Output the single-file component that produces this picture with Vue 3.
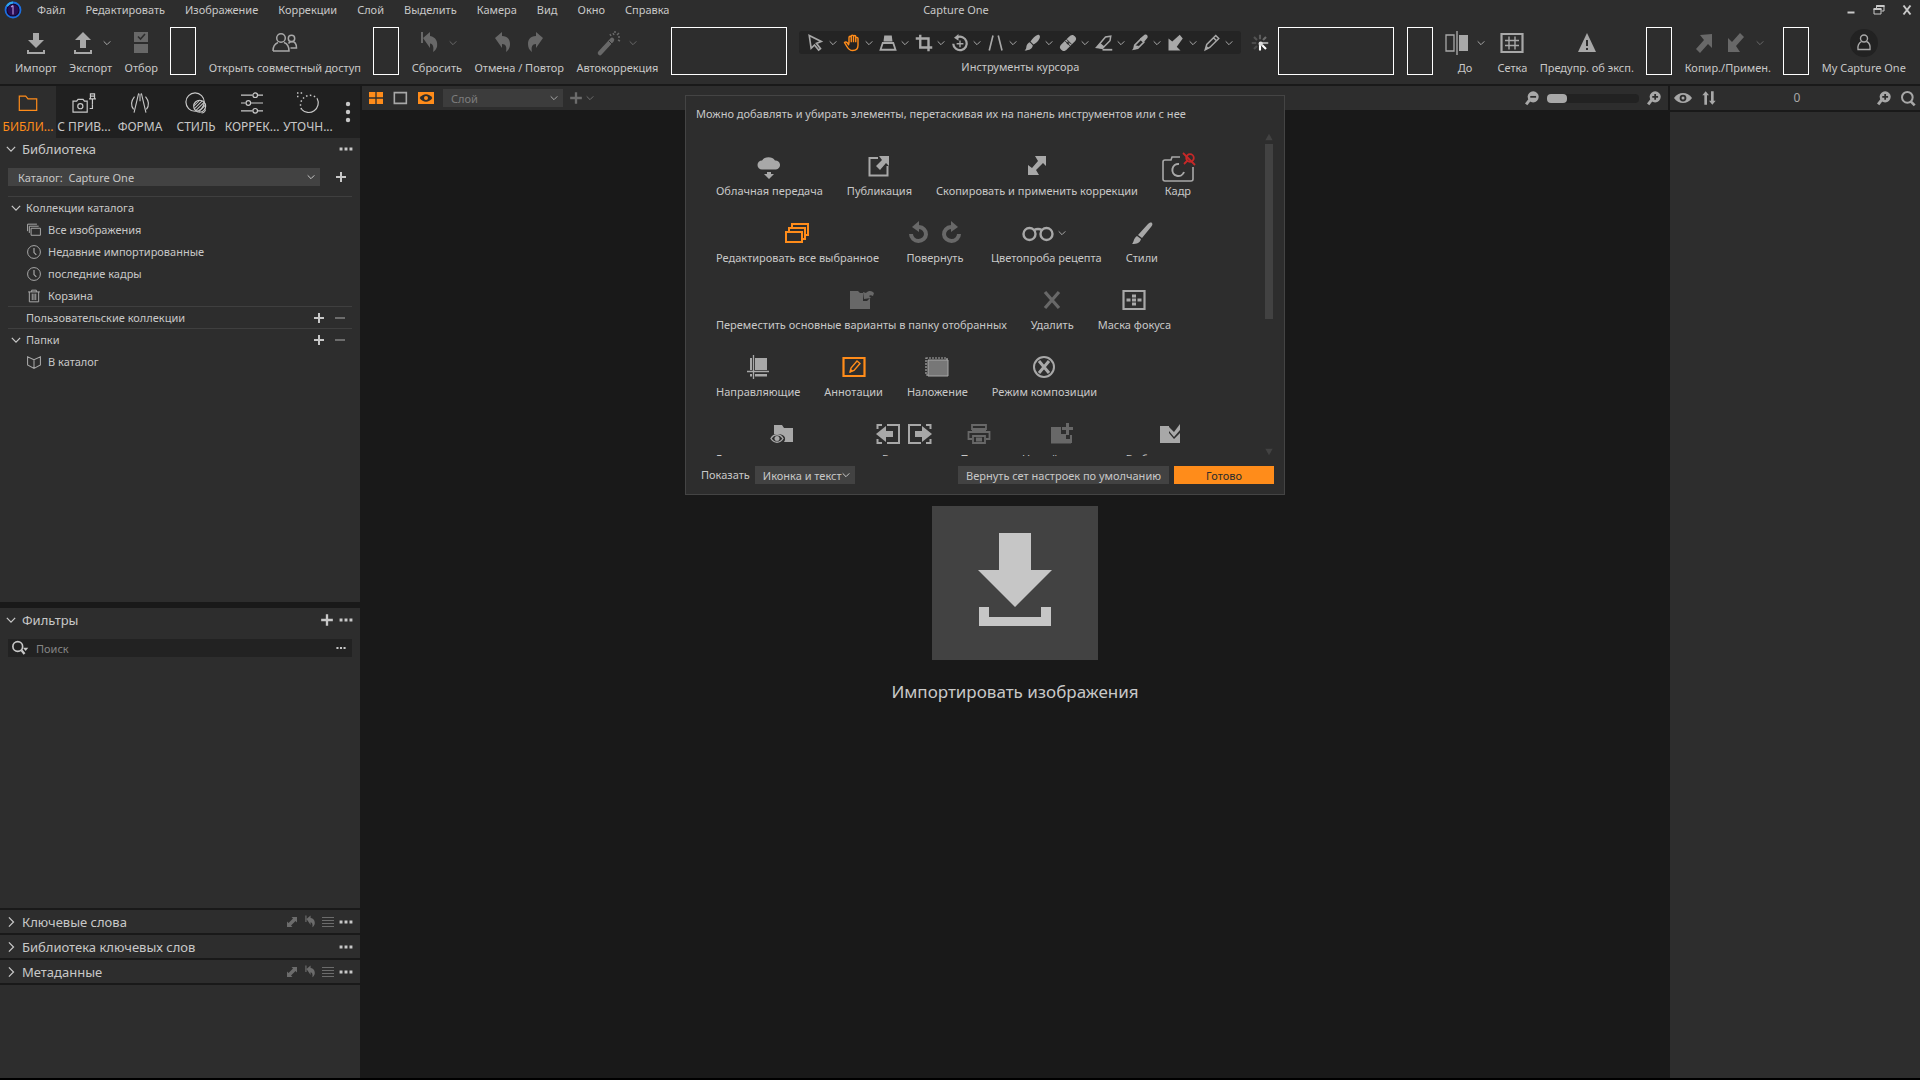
<template>
  <div class="app">
    <header class="menubar">
      <Icon name="logo" :size="18" class="logo" />
      <nav class="menu">
        <button v-for="item in menu" :key="item" class="menu-item">{{ item }}</button>
      </nav>
      <span class="title">Capture One</span>
      <div class="window-buttons">
        <button aria-label="Свернуть"><Icon name="minimize" :size="12" /></button>
        <button aria-label="Восстановить"><Icon name="restore" :size="12" /></button>
        <button aria-label="Закрыть"><Icon name="close" :size="12" /></button>
      </div>
    </header>

    <div class="toolbar">
      <template v-for="(tool, i) in toolbar" :key="i">
        <div v-if="tool.space" :class="['space', tool.space]"></div>
        <div v-else-if="tool.spinner" class="spinner"><Icon name="spinner" :size="18" /></div>
        <div v-else-if="tool.cursors" class="tool">
          <div class="cursor-tools">
            <button v-for="c in cursors" :key="c" :class="['cursor-tool', { active: c === 'hand' }]" :aria-label="c">
              <Icon :name="c" :size="18" />
              <Icon name="chevron" :size="8" class="drop" />
            </button>
          </div>
          <span class="label">{{ tool.label }}</span>
        </div>
        <button v-else :class="['tool', { disabled: tool.disabled, account: tool.account }]">
          <span class="tool-icons">
            <Icon v-for="n in tool.icons" :key="n" :name="n" :size="24" />
            <Icon v-if="tool.drop" name="chevron" :size="8" />
          </span>
          <span class="label">{{ tool.label }}</span>
        </button>
      </template>
    </div>

    <div class="main">
      <aside class="sidebar">
        <div class="tabs">
          <button v-for="tab in tabs" :key="tab.label" :class="['tab', { active: tab.active }]">
            <Icon :name="tab.icon" :size="22" />
            <span>{{ tab.label }}</span>
          </button>
          <button class="tabs-more" aria-label="Ещё"><Icon name="dotsV" :size="24" /></button>
        </div>

        <section class="panel library">
          <div class="panel-head">
            <Icon name="chevron" :size="10" />
            <h2>Библиотека</h2>
            <button class="push" aria-label="Меню"><Icon name="dots" :size="14" /></button>
          </div>
          <div class="catalog">
            <div class="select-wrap">
              <select aria-label="Каталог">
                <option>Каталог:&nbsp; Capture One</option>
              </select>
              <Icon name="chevron" :size="8" class="select-arrow" />
            </div>
            <button aria-label="Добавить каталог"><Icon name="plus" :size="12" /></button>
          </div>
          <ul class="tree">
            <li v-for="row in tree" :key="row.label" :class="['row', { group: row.group }]">
              <Icon v-if="row.group" :name="row.open ? 'chevron' : 'none'" :size="10" />
              <Icon v-else :name="row.icon" :size="14" class="row-icon" />
              <span>{{ row.label }}</span>
              <span v-if="row.edit" class="row-edit">
                <button aria-label="Добавить"><Icon name="plus" :size="12" /></button>
                <button aria-label="Удалить" class="dim"><Icon name="minus" :size="12" /></button>
              </span>
            </li>
          </ul>
        </section>

        <section class="panel filters">
          <div class="panel-head">
            <Icon name="chevron" :size="10" />
            <h2>Фильтры</h2>
            <button class="push" aria-label="Добавить фильтр"><Icon name="plus" :size="14" /></button>
            <button aria-label="Меню"><Icon name="dots" :size="14" /></button>
          </div>
          <div class="search">
            <Icon name="searchDrop" :size="18" />
            <input v-model="query" type="text" placeholder="Поиск" aria-label="Поиск" />
            <button aria-label="Параметры поиска"><Icon name="dots" :size="10" /></button>
          </div>
        </section>

        <section v-for="p in collapsed" :key="p.label" class="panel">
          <div class="panel-head">
            <Icon name="chevronRight" :size="10" />
            <h2>{{ p.label }}</h2>
            <span class="push panel-actions">
              <template v-if="p.actions">
                <button class="dim" aria-label="Копировать"><Icon name="expand" :size="12" /></button>
                <button class="dim" aria-label="Сбросить"><Icon name="reset" :size="14" /></button>
                <button class="dim" aria-label="Наборы"><Icon name="lines" :size="12" /></button>
              </template>
              <button aria-label="Меню"><Icon name="dots" :size="14" /></button>
            </span>
          </div>
        </section>
        <div class="panel rest"></div>
      </aside>

      <main class="viewer">
        <div class="viewer-bar">
          <button class="active" aria-label="Сетка"><Icon name="grid4" :size="16" /></button>
          <button aria-label="Один кадр"><Icon name="frame" :size="16" /></button>
          <button class="active" aria-label="Просмотр"><Icon name="eyeBox" :size="16" /></button>
          <div class="layers">
            <div class="select-wrap layer">
              <select disabled aria-label="Слой">
                <option>Слой</option>
              </select>
              <Icon name="chevron" :size="8" class="select-arrow" />
            </div>
            <button class="dim add-layer" aria-label="Добавить слой">
              <Icon name="plus" :size="14" /><Icon name="chevron" :size="8" />
            </button>
          </div>
          <div class="zoom">
            <button aria-label="Уменьшить"><Icon name="zoomOut" :size="14" /></button>
            <input v-model="zoom" type="range" min="0" max="100" aria-label="Масштаб" />
            <button aria-label="Увеличить"><Icon name="zoomIn" :size="14" /></button>
          </div>
        </div>
        <div class="empty">
          <button class="import" aria-labelledby="import-label">
            <svg width="74" height="94" viewBox="0 0 74 94" fill="#c6c6c6">
              <path d="M21 0h32v37h21L37 74 0 37h21z" />
              <path d="M1 74h10v10h52V74h10v19H1z" />
            </svg>
          </button>
          <span id="import-label" class="import-label">Импортировать изображения</span>
        </div>
      </main>

      <aside class="browser">
        <div class="browser-bar">
          <button aria-label="Показать"><Icon name="eye" :size="18" /></button>
          <button aria-label="Сортировка"><Icon name="sort" :size="16" /></button>
          <span class="count">0</span>
          <button aria-label="Увеличить"><Icon name="zoomIn" :size="14" /></button>
          <button aria-label="Искать"><Icon name="search" :size="16" /></button>
        </div>
        <div class="browser-body"></div>
      </aside>
    </div>

    <div class="dialog" role="dialog" aria-label="Настройка панели инструментов">
      <p>Можно добавлять и убирать элементы, перетаскивая их на панель инструментов или с нее</p>
      <div class="palette">
        <div class="palette-rows">
          <div v-for="(row, i) in palette" :key="i" class="palette-row">
            <button v-for="t in row" :key="t.label" :class="['tool', { disabled: t.disabled, active: t.active }]">
              <span class="tool-icons">
                <Icon v-for="n in t.icons" :key="n" :name="n" :size="24" />
                <Icon v-if="t.drop" name="chevron" :size="8" />
              </span>
              <span class="label">{{ t.label }}</span>
            </button>
          </div>
        </div>
        <div class="scrollbar">
          <Icon name="triUp" :size="8" />
          <div class="track"><div class="thumb"></div></div>
          <Icon name="triDown" :size="8" />
        </div>
      </div>
      <div class="dialog-foot">
        <label for="show">Показать</label>
        <div class="select-wrap show">
          <select id="show">
            <option>Иконка и текст</option>
          </select>
          <Icon name="chevron" :size="8" class="select-arrow" />
        </div>
        <button class="btn push">Вернуть сет настроек по умолчанию</button>
        <button class="btn primary">Готово</button>
      </div>
    </div>
  </div>
</template>

<script setup>
import { ref, h } from 'vue';

const query = ref('');
const zoom = ref(0);

const S = 'fill="none" stroke="currentColor"';

// every icon is drawn on a 24 x 24 grid
const icons = {
  none: '',
  logo: '<circle cx="12" cy="12" r="10" fill="#14062b" stroke="#1d6fe0" stroke-width="2.4"/><path d="M4 7a10 10 0 0 1 8-5" fill="none" stroke="#31a8f0" stroke-width="2.4"/><circle cx="12" cy="12" r="7.4" fill="#2a0d55"/><path d="M12 6v12M12 6l-2.500 2" fill="none" stroke="#b79be0" stroke-width="1.500"/>',
  minimize: '<path d="M5 15h14v4H5z" fill="currentColor"/>',
  restore: `<path d="M7 8V3h15v11h-5" ${S} stroke-width="2"/><path d="M7 2h16v4H7z" fill="currentColor"/><path d="M2 10h14v10H2z" ${S} stroke-width="2"/><path d="M1 8h16v4H1z" fill="currentColor"/>`,
  close: `<path d="M5 3l14 18M19 3L5 21" ${S} stroke-width="4"/>`,
  chevron: `<path d="M2 7l10 10L22 7" ${S} stroke-width="3"/>`,
  chevronRight: `<path d="M7 1l11 11L7 23" ${S} stroke-width="3"/>`,
  plus: `<path d="M12 2v20M2 12h20" ${S} stroke-width="4"/>`,
  minus: `<path d="M2 12h20" ${S} stroke-width="4"/>`,
  dots: '<path d="M1 9.500h5v5H1zM9.500 9.500h5v5h-5zM18 9.500h5v5h-5z" fill="currentColor"/>',
  dotsV: '<circle cx="12" cy="4" r="2.200" fill="currentColor"/><circle cx="12" cy="12" r="2.200" fill="currentColor"/><circle cx="12" cy="20" r="2.200" fill="currentColor"/>',
  import: `<path d="M9 2h6v7h5l-8 8-8-8h5z" fill="currentColor"/><path d="M4 19v3h16v-3" ${S} stroke-width="2"/>`,
  export: `<path d="M12 1l8 8h-5v8H9V9H4z" fill="currentColor"/><path d="M4 19v3h16v-3" ${S} stroke-width="2"/>`,
  cull: `<path d="M5 1h14v10H5zM5 13h14v9H5z" fill="currentColor"/><path d="M9 5.500l2.500 2.500L16 3" fill="none" stroke="#2d2d2d" stroke-width="1.600"/>`,
  people: `<circle cx="8" cy="7" r="4.300" ${S} stroke-width="1.500"/><path d="M0 20c0-5 2.500-7.500 5-8.500M11 11.500c3 1 5 4 5 8.500H0" ${S} stroke-width="1.500"/><circle cx="18.500" cy="7.500" r="3.200" ${S} stroke-width="1.500"/><path d="M15.500 12.500c1-1.500 2-2 3-2 3 0 5 2 5 6.500h-6" ${S} stroke-width="1.500"/>`,
  reset: '<path d="M4 2h2v11H4zM6 8l7-6v4c6 1 8 6 7 11-1 2-2 4-4 5 1-5 0-8-3-8.500V18z" fill="currentColor" transform="translate(0 -1)"/>',
  undo: '<path d="M4 8l7-6v4c6 0 8 4 8 8 0 3-1 6-4 8 1-5 0-8-4-8v4z" fill="currentColor" transform="translate(0 -1)"/>',
  redo: '<path d="M20 8l-7-6v4c-6 0-8 4-8 8 0 3 1 6 4 8-1-5 0-8 4-8v4z" fill="currentColor" transform="translate(0 -1)"/>',
  wand: `<path d="M3 22L15 9" ${S} stroke-width="4.500" stroke-linecap="round"/><path d="M12 10l3 3" stroke="#2d2d2d" stroke-width="1"/><path d="M16 2l1 2M22 2l-2 2M21 9l2 1M13 3l1 2M23 6h-2M18 0v2" ${S} stroke-width="1.500"/>`,
  pointer: `<path d="M3 2l16 8-6.500 2.500 5.500 7-2.500 2-5.500-7L5.500 19z" ${S} stroke-width="2.200"/>`,
  hand: `<path d="M8 13V4.500a1.400 1.400 0 0 1 3 0V11M11 10V3a1.400 1.400 0 0 1 3 0v8M14 10V3.500a1.400 1.400 0 0 1 3 0V11M17 11V6a1.400 1.400 0 0 1 3 0v9c0 4-2 7-7 7-4 0-6-2-7.500-5L2 11.500c1-1.500 3-1 4 .5l2 3" ${S} stroke-width="1.900"/>`,
  loupe: `<path d="M7 2h10l1 8H6z" fill="currentColor"/><path d="M5 12l-3 9h20l-3-9z" ${S} stroke-width="2.400"/>`,
  crop: `<path d="M7 1v17h16M1 6h17v17" ${S} stroke-width="3.200"/>`,
  rotate: `<path d="M8 4.500a9 9 0 1 1-5 8.500" ${S} stroke-width="3"/><path d="M10 0v9L4 5z" fill="currentColor"/><path d="M12 8.500v9M7.500 13h9" ${S} stroke-width="1.800"/>`,
  keystone: `<path d="M8 2L3 22M15 2l5 20" ${S} stroke-width="2.200"/>`,
  brush: '<path d="M20 1c3 0 3 3 2 5-2 4-4 6-8 8l-4-4c3-4 6-8 10-9zM9 11l4 4c0 4-4 7-11 7 3-2 2-4 3-7 1-2 2-3 4-4z" fill="currentColor"/>',
  heal: '<path d="M3 21c-3-3-2-5 1-8L13 4c3-3 5-4 8-1s2 5-1 8l-9 9c-3 3-5 4-8 1z" fill="currentColor"/><path d="M8 9l7 7M10 7l7 7M12 10v4M10 12h4" stroke="#242424" stroke-width="1.300"/>',
  eraser: `<path d="M2 18L14 4l7-1-1 6L10 19z" ${S} stroke-width="2"/><path d="M10 21h13" ${S} stroke-width="2.400"/><path d="M2 18l5-6 6 5-3 3z" fill="currentColor"/>`,
  dropper: `<path d="M4 20l1-5 8-8 4 4-8 8z" ${S} stroke-width="2.200"/><path d="M12 6l6-5c3-1 5 1 4 4l-5 6zM1 22l4-2-1-2zM5 15l6 1-4 4-4 1z" fill="currentColor"/>`,
  applyArrow: '<path d="M23 6l-4-5-10 9-5-4v16h16l-5-5z" fill="currentColor" transform="translate(-2 0)"/>',
  pen: `<path d="M3 21l2-7L17 2l4 4L9 18zM14 5l4 4" ${S} stroke-width="2"/><path d="M3 21l2-5 3 3z" fill="currentColor"/>`,
  spinner: `<g ${S} stroke-width="2.800"><path d="M12 1v6" opacity=".3"/><path d="M20 4l-4 4" opacity=".4"/><path d="M15 12h8" opacity=".75"/><path d="M15 15l5 5" stroke="#fff"/><path d="M12 14v8" stroke="#fff"/><path d="M8 16l-4 4" opacity=".2"/><path d="M1 12h6" opacity=".2"/><path d="M4 4l4 4" opacity=".25"/></g><circle cx="13" cy="13" r="3" fill="#ddd"/>`,
  before: `<path d="M1 4h8v16H1z" ${S} stroke-width="1.300"/><path d="M14 4h9v16h-9z" fill="currentColor"/><path d="M12 0v24" ${S} stroke-width="1.400"/>`,
  gridBox: `<path d="M1.500 3h21v18h-21z" ${S} stroke-width="2.200"/><path d="M9 5.500v13M15 5.500v13M5 9.500h14M5 14.500h14" ${S} stroke-width="1.400"/>`,
  warning: '<path d="M12 2l9 19H3z" fill="currentColor"/><path d="M12 9v6M12 17v2" stroke="#2d2d2d" stroke-width="2"/>',
  arrowUp: '<path d="M20 3v14l-4-4-8 9-4-4 8-9-4-5z" fill="currentColor"/>',
  arrowDown: '<path d="M4 21V7l4 4 8-9 4 4-8 9 4 6z" fill="currentColor"/>',
  user: `<circle cx="12" cy="12" r="14" fill="#222"/><circle cx="12" cy="7.500" r="3.500" ${S} stroke-width="1.400"/><path d="M9.500 10.500C7 12 5.500 15 6 18.500h12c.5-4-1-7-3.500-8" ${S} stroke-width="1.400"/>`,
  folder: `<path d="M2.500 4.500h7l2.500 3h9.500v12.500h-19z" ${S} stroke-width="1.300"/>`,
  tether: `<path d="M0 10h4l1.500-2h5.500l1.500 2h3v12H0z" ${S} stroke-width="1.300"/><circle cx="8" cy="15.500" r="2.800" ${S} stroke-width="1.300"/><path d="M19 2v5.500h4.500V2zM17.500 7.500h7.500M19 4.500h4.500M21.200 8v6" ${S} stroke-width="1.300"/><path d="M21.200 14v4h-3" ${S} stroke-width="1.300"/>`,
  shape: `<path d="M10.500 1.500l-5 21M13.500 1.500l5 21M12 2v8M6 5c-4 5-4 10-1 14M18 5c4 5 4 10 1 14" ${S} stroke-width="1.200"/>`,
  style: `<circle cx="11" cy="11" r="10" ${S} stroke-width="1.300"/><circle cx="16" cy="15.500" r="6.500" ${S} stroke-width="1.300"/><path d="M10 15l6-6M10.500 18l8-8M12 20l8.500-8.500M15 21.500l7-7M22 19c1 2-2 4-4 4" ${S} stroke-width="1.100"/>`,
  adjust: `<path d="M0 3.500h12.500M18 3.500h6M0 12h5M11 12h13M0 20.500h12.500M18 20.500h6" ${S} stroke-width="1.300"/><circle cx="15.500" cy="3.500" r="2.500" ${S} stroke-width="1.300"/><circle cx="8" cy="12" r="2.500" ${S} stroke-width="1.300"/><circle cx="15.500" cy="20.500" r="2.500" ${S} stroke-width="1.300"/>`,
  refine: `<path d="M22 7a10.500 10.500 0 0 1-17 12" ${S} stroke-width="1.300"/><path d="M5 19A10.500 10.500 0 0 1 22 7" ${S} stroke-width="1.600" stroke-dasharray="1.600 2.600"/><path d="M0 1h1.600M4 1h1.600M0 5h1.600" ${S} stroke-width="1.600"/>`,
  stack: `<path d="M7 9h16v12H7zM4 17V5.500h16M1 14V2h16" ${S} stroke-width="1.700"/>`,
  clock: `<circle cx="12" cy="12" r="11" ${S} stroke-width="1.700"/><path d="M12 5v8l4 4" ${S} stroke-width="2"/>`,
  trash: `<path d="M2 5h20M4 5v17h16V5M8 5V2h8v3M9 8v11M12 8v11M15 8v11" ${S} stroke-width="1.700"/>`,
  book: `<path d="M12 8L1 3v14l11 6 11-6V3zM12 8v15" ${S} stroke-width="1.800"/>`,
  searchDrop: `<circle cx="9" cy="10" r="6.500" ${S} stroke-width="2.200"/><path d="M14 15l4 5" ${S} stroke-width="3"/><path d="M16 11.500h7L19.500 16z" fill="currentColor"/>`,
  search: `<circle cx="11" cy="11" r="8" ${S} stroke-width="3"/><path d="M16 17l6 6" ${S} stroke-width="4"/>`,
  expand: '<path d="M22 2v11l-3-3-9 9 3 3H2V11l3 3 9-9-3-3z" fill="currentColor"/>',
  lines: `<path d="M0 3h24M0 9h24M0 15h24M0 21h24" ${S} stroke-width="2"/>`,
  grid4: '<path d="M1.500 3h9.500v8H1.500zM13 3h9.500v8H13zM1.500 13h9.500v8H1.500zM13 13h9.500v8H13z" fill="currentColor"/>',
  frame: `<path d="M2 4h18v16H2z" ${S} stroke-width="2.400"/>`,
  eyeBox: '<path d="M0 3h24v18H0z" fill="currentColor"/><path d="M2.500 12c5-7.500 14-7.500 19 0-5 7.500-14 7.500-19 0z" fill="#2d2d2d"/><circle cx="12" cy="12" r="3" fill="currentColor"/>',
  eye: '<path d="M0 12C6 3 18 3 24 12c-6 9-18 9-24 0z" fill="currentColor"/><circle cx="12" cy="12" r="4.500" fill="#2d2d2d"/><circle cx="12" cy="12" r="2" fill="currentColor"/>',
  sort: '<path d="M7 2l5 6H9v14H5V8H2zM17 22l-5-6h3V2h4v14h3z" fill="currentColor"/>',
  zoomOut: `<circle cx="14" cy="10" r="9.500" fill="currentColor"/><path d="M8 15l-6 8" ${S} stroke-width="5"/><path d="M9 10h10" stroke="#2d2d2d" stroke-width="3"/>`,
  zoomIn: `<circle cx="14" cy="10" r="9.500" fill="currentColor"/><path d="M8 15l-6 8" ${S} stroke-width="5"/><path d="M9 10h10M14 5v10" stroke="#2d2d2d" stroke-width="3"/>`,
  cloud: '<path d="M5 14.500a4.500 4.500 0 0 1 0-9 7.500 6.500 0 0 1 13 0 4.500 4.500 0 0 1 1 9z" fill="currentColor" transform="translate(0 1)"/><path d="M10 18h4v2h3l-5 5-5-5h3z" fill="currentColor"/>',
  publish: `<path d="M11 4H2.500v17.500h18V12" ${S} stroke-width="2"/><path d="M22 2v10l-3-3-6 7-4-4 6-6-3-4z" fill="currentColor"/>`,
  copyApply: '<path d="M21 2v10l-3-3-7 7 3 5H3V11l4 3 6-7-3-5z" fill="currentColor"/>',
  camera: `<path d="M14 3H6L5 6H-1c-1 0-2 1-2 2v17c0 1 1 2 2 2h26c1 0 2-1 2-2V13" ${S} stroke-width="1.600"/><path d="M13 10a6 6 0 1 0 5 8" ${S} stroke-width="2"/><circle cx="24" cy="4" r="3.800" fill="none" stroke="#c62828" stroke-width="1.800"/><path d="M17 -1l12 12M18 10l4-4" stroke="#c62828" stroke-width="1.800"/>`,
  editAll: `<path d="M1 11h16v10H1zM4 10V7h16v11h-2M7 6V3h16v11h-2" ${S} stroke-width="2"/>`,
  rotL: `<path d="M4 13a7.500 7 0 1 0 8-7" ${S} stroke-width="4"/><path d="M12 0v11L5 6z" fill="currentColor"/>`,
  rotR: `<path d="M20 13a7.500 7 0 1 1-8-7" ${S} stroke-width="4"/><path d="M12 0v11l7-5z" fill="currentColor"/>`,
  glasses: `<circle cx="3.500" cy="13" r="6" ${S} stroke-width="2.400"/><circle cx="20.500" cy="13" r="6" ${S} stroke-width="2.400"/><path d="M8 9q4-2 8 0" ${S} stroke-width="2.400"/>`,
  styleBrush: '<path d="M22 2c1 1 0 3-1 4l-9 11-4-3L18 3c1-1 3-2 4-1zM7 15l4 3c-1 4-4 5-9 5 2-2 1-5 5-8z" fill="currentColor"/>',
  moveFolder: '<path d="M1 3h8l2 2h3v8l4 0 3-3v11H1z" fill="currentColor"/><path d="M15 11l-1-7 3 1c3-3 6-2 8 0l-1 3c-2-1-3-1-4 0l2 2z" fill="currentColor"/>',
  del: `<path d="M5 4l14 16M19 4L5 20" ${S} stroke-width="3.200"/>`,
  focusMask: `<path d="M1.500 3h21v18h-21z" ${S} stroke-width="2.200"/><path d="M10 6.500h4v3h-4zM10 14.500h4v3h-4zM4.500 10.500h4v3h-4zM15.500 10.500h4v3h-4zM10 10.500h4v3h-4z" fill="currentColor"/>`,
  guides: `<path d="M9 3h12v12H9zM4 3h2v12H4zM9 19h12v2.500H9zM4 19h2v2.500H4z" fill="currentColor"/><path d="M7.500 0v24M1 16.500h22" ${S} stroke-width="1.300"/>`,
  annotate: `<path d="M1.500 3h21v18h-21z" ${S} stroke-width="2.200"/><path d="M8 17l1-4 6-7 3 2.500-6 7z" ${S} stroke-width="1.400"/><path d="M8 18l1-4 2 2z" fill="currentColor"/>`,
  overlay: `<path d="M1 3h21v17H1z" ${S} stroke-width="1.200" stroke-dasharray="2 1"/><path d="M3 5h20v16H3z" fill="#777" stroke="currentColor"/>`,
  compose: `<circle cx="12" cy="12" r="10" ${S} stroke-width="2"/><path d="M7 6l10 12M17 6L7 18" ${S} stroke-width="3"/>`,
  peekFolder: '<path d="M4 3h8l2 3h9v14H14c3-4 0-8-6-8H4z" fill="currentColor"/><path d="M1 16.500c3-5 9-5 12 0-3 5-9 5-12 0z" fill="none" stroke="currentColor" stroke-width="1.400"/><circle cx="7" cy="16.500" r="2.500" fill="currentColor"/>',
  toLeft: `<path d="M11 3h12v18H11M6 3H1.500v4M1.500 17v4H6" ${S} stroke-width="2"/><path d="M0 12l10-8v5h7v6h-7v5z" fill="currentColor"/>`,
  toRight: `<path d="M13 3H1v18h12M18 3h4.500v4M22.500 17v4H18" ${S} stroke-width="2"/><path d="M24 12L14 4v5H7v6h7v5z" fill="currentColor"/>`,
  print: `<path d="M5 8V3h14v5M5 17H1.500V10h21v7H19M6 14h12v7H6zM9 16.500h6M9 18.500h6" ${S} stroke-width="1.800"/><path d="M5 6h14v5H5z" fill="currentColor"/>`,
  newFolder: '<path d="M1 5h10v7h5v5h5v4.500H1z" fill="currentColor"/><path d="M16 1h3v4h4v3h-4v5h-3V8h-4V5h4zM20 13h2v8h-2z" fill="currentColor"/>',
  checkFolder: '<path d="M2 4h9v17H2zM11 11l5 6 6-6v10H11z" fill="currentColor"/><path d="M11 5l5 5 6-8v6l-6 7-5-6z" fill="currentColor"/>',
  triUp: '<path d="M12 2l11 20H1z" fill="currentColor"/>',
  triDown: '<path d="M12 22L1 2h22z" fill="currentColor"/>',
};

const Icon = (props) =>
  h('svg', {
    width: props.size,
    height: props.size,
    viewBox: '0 0 24 24',
    overflow: 'visible',
    'aria-hidden': 'true',
    innerHTML: icons[props.name],
  });
Icon.props = ['name', 'size'];

const menu = ['Файл', 'Редактировать', 'Изображение', 'Коррекции', 'Слой', 'Выделить', 'Камера', 'Вид', 'Окно', 'Справка'];

const cursors = ['pointer', 'hand', 'loupe', 'crop', 'rotate', 'keystone', 'brush', 'heal', 'eraser', 'dropper', 'applyArrow', 'pen'];

const toolbar = [
  { label: 'Импорт', icons: ['import'] },
  { label: 'Экспорт', icons: ['export'], drop: true },
  { label: 'Отбор', icons: ['cull'], disabled: true },
  { space: 'narrow' },
  { label: 'Открыть совместный доступ', icons: ['people'] },
  { space: 'narrow' },
  { label: 'Сбросить', icons: ['reset'], drop: true, disabled: true },
  { label: 'Отмена / Повтор', icons: ['undo', 'redo'], disabled: true },
  { label: 'Автокоррекция', icons: ['wand'], drop: true, disabled: true },
  { space: 'wide' },
  { label: 'Инструменты курсора', cursors: true },
  { spinner: true },
  { space: 'wide' },
  { space: 'narrow' },
  { label: 'До', icons: ['before'], drop: true },
  { label: 'Сетка', icons: ['gridBox'] },
  { label: 'Предупр. об эксп.', icons: ['warning'] },
  { space: 'narrow' },
  { label: 'Копир./Примен.', icons: ['arrowUp', 'arrowDown'], drop: true, disabled: true },
  { space: 'narrow' },
  { label: 'My Capture One', icons: ['user'], account: true },
];

const tabs = [
  { label: 'БИБЛИ...', icon: 'folder', active: true },
  { label: 'С ПРИВ...', icon: 'tether' },
  { label: 'ФОРМА', icon: 'shape' },
  { label: 'СТИЛЬ', icon: 'style' },
  { label: 'КОРРЕК...', icon: 'adjust' },
  { label: 'УТОЧН...', icon: 'refine' },
];

const tree = [
  { label: 'Коллекции каталога', group: true, open: true },
  { label: 'Все изображения', icon: 'stack' },
  { label: 'Недавние импортированные', icon: 'clock' },
  { label: 'последние кадры', icon: 'clock' },
  { label: 'Корзина', icon: 'trash' },
  { label: 'Пользовательские коллекции', group: true, edit: true },
  { label: 'Папки', group: true, open: true, edit: true },
  { label: 'В каталог', icon: 'book' },
];

const collapsed = [
  { label: 'Ключевые слова', actions: true },
  { label: 'Библиотека ключевых слов' },
  { label: 'Метаданные', actions: true },
];

const palette = [
  [
    { label: 'Облачная передача', icons: ['cloud'] },
    { label: 'Публикация', icons: ['publish'] },
    { label: 'Скопировать и применить коррекции', icons: ['copyApply'] },
    { label: 'Кадр', icons: ['camera'] },
  ],
  [
    { label: 'Редактировать все выбранное', icons: ['editAll'], active: true },
    { label: 'Повернуть', icons: ['rotL', 'rotR'], disabled: true },
    { label: 'Цветопроба рецепта', icons: ['glasses'], drop: true },
    { label: 'Стили', icons: ['styleBrush'] },
  ],
  [
    { label: 'Переместить основные варианты в папку отобранных', icons: ['moveFolder'], disabled: true },
    { label: 'Удалить', icons: ['del'], disabled: true },
    { label: 'Маска фокуса', icons: ['focusMask'] },
  ],
  [
    { label: 'Направляющие', icons: ['guides'] },
    { label: 'Аннотации', icons: ['annotate'], active: true },
    { label: 'Наложение', icons: ['overlay'] },
    { label: 'Режим композиции', icons: ['compose'] },
  ],
  [
    { label: 'Группировать по папкам', icons: ['peekFolder'] },
    { label: 'Вариант', icons: ['toLeft', 'toRight'] },
    { label: 'Печать', icons: ['print'], disabled: true },
    { label: 'Новый каталог', icons: ['newFolder'], disabled: true },
    { label: 'Выбрать каталог', icons: ['checkFolder'] },
  ],
];
</script>

<style>
body {
  background: #000;
}
</style>

<style scoped>
.app {
  position: relative;
  display: flex;
  flex-direction: column;
  height: 100vh;
  box-sizing: border-box;
  border-bottom: 2px solid #000;
  background: #191919;
  color: #c8c8c8;
  font-family: "Noto Sans", "Open Sans", sans-serif;
  font-size: 11px;
  line-height: 16px;
  overflow: hidden;
}

button,
input,
select {
  margin: 0;
  padding: 0;
  border: none;
  background: none;
  color: inherit;
  font: inherit;
  line-height: inherit;
}
button {
  display: flex;
  align-items: center;
  white-space: nowrap;
}
svg {
  display: block;
  flex-shrink: 0;
}
.push {
  margin-left: auto;
}
button.dim {
  color: #6c6c6c;
}

/* menu bar */
.menubar {
  display: flex;
  align-items: center;
  height: 20px;
  padding: 0 7px 0 4px;
  background: #2d2d2d;
}
.menu {
  display: flex;
  gap: 20px;
  margin-left: 15px;
}
.title {
  position: absolute;
  left: 0;
  right: 8px;
  text-align: center;
  pointer-events: none;
}
.window-buttons {
  display: flex;
  gap: 16px;
  margin-left: auto;
}

/* top toolbar */
.toolbar {
  display: flex;
  justify-content: space-between;
  height: 64px;
  flex-shrink: 0;
  box-sizing: border-box;
  padding: 7px 14px 0 15px;
  margin-bottom: 2px;
  background: #2d2d2d;
}
.space {
  height: 48px;
  box-sizing: border-box;
  border: 1px solid #fff;
}
.space.narrow {
  width: 26px;
}
.space.wide {
  width: 116px;
}
.spinner {
  display: flex;
  justify-content: center;
  width: 12px;
  padding-top: 7px;
}
.tool {
  display: flex;
  flex-direction: column;
  align-items: center;
  gap: 5px;
  white-space: nowrap;
}
.toolbar .tool {
  padding-top: 4px;
  height: 48px;
  box-sizing: border-box;
}
.tool-icons {
  display: flex;
  align-items: center;
  gap: 8px;
  height: 24px;
  color: #a8a8a8;
}
.disabled .tool-icons {
  color: #686868;
}
.active .tool-icons {
  color: #ff8c1a;
}
.cursor-tools {
  display: flex;
  height: 24px;
  padding: 0 5px;
  border-radius: 3px;
  background: #242424;
  color: #a8a8a8;
}
.cursor-tool {
  gap: 4px;
  width: 36px;
  padding-left: 3px;
  box-sizing: border-box;
}
.cursor-tool.active {
  color: #ff8c1a;
}
.drop {
  color: #a8a8a8;
}

.main {
  display: flex;
  flex: 1;
  min-height: 0;
}

/* left column */
.sidebar {
  display: flex;
  flex-direction: column;
  gap: 2px;
  width: 360px;
  flex-shrink: 0;
}
.tabs {
  display: flex;
  height: 52px;
  margin-bottom: -2px;
  flex-shrink: 0;
  background: #202020;
}
.tab {
  flex-direction: column;
  justify-content: center;
  gap: 5px;
  width: 56px;
  padding-top: 2px;
  font-size: 12px;
}
.tab.active {
  background: #2d2d2d;
  color: #ff8c1a;
}
.tabs-more {
  margin: 0 auto;
}
.panel {
  background: #2d2d2d;
}
.library {
  flex: 465 1 0;
  margin-bottom: 4px;
}
.filters {
  flex: 300 1 0;
}
.rest {
  flex: 93 1 0;
}
.panel-head {
  display: flex;
  align-items: center;
  gap: 5px;
  height: 23px;
  padding: 0 7px 0 6px;
}
.library .panel-head {
  height: 22px;
}
.panel-head h2 {
  margin: 0 0 0 1px;
  font-size: 13px;
  font-weight: 400;
}
.panel-actions {
  display: flex;
  align-items: center;
  gap: 5px;
}

.select-wrap {
  position: relative;
}
.select-wrap select {
  display: block;
  width: 100%;
  height: 18px;
  padding: 1px 16px 0 10px;
  appearance: none;
  background: #424242;
  opacity: 1;
}
.select-arrow {
  position: absolute;
  top: 5px;
  right: 5px;
  pointer-events: none;
}
.catalog {
  display: flex;
  gap: 15px;
  padding: 8px 13px 0 8px;
}
.catalog .select-wrap {
  flex: 1;
}
.tree {
  margin: 10px 8px 0;
  padding: 0;
  list-style: none;
}
.row {
  display: flex;
  align-items: center;
  gap: 7px;
  height: 21px;
  padding-left: 19px;
  border-top: 1px solid transparent;
}
.row.group {
  gap: 5px;
  padding-left: 3px;
  border-color: #3f3f3f;
}
.row-icon {
  color: #a8a8a8;
}
.row-edit {
  display: flex;
  gap: 9px;
  margin-left: auto;
  padding-right: 6px;
}

.search {
  display: flex;
  align-items: center;
  gap: 7px;
  height: 18px;
  margin: 8px;
  padding: 0 6px 0 3px;
  background: #222;
}
.search input {
  flex: 1;
  min-width: 0;
  padding-top: 1px;
  outline: none;
}
.search input::placeholder {
  color: #858585;
  opacity: 1;
}

/* viewer */
.viewer {
  display: flex;
  flex-direction: column;
  flex: 1;
  margin: 0 2px;
}
.viewer-bar {
  display: flex;
  align-items: center;
  gap: 9px;
  height: 24px;
  padding: 0 7px 0 6px;
  background: #2d2d2d;
  color: #a8a8a8;
}
.viewer-bar .active {
  color: #ff8c1a;
}
.layers {
  display: flex;
  align-items: center;
  gap: 6px;
}
.layer {
  width: 120px;
}
.select-wrap.layer select {
  padding-left: 8px;
  background: #3c3c3c;
  color: #7c7c7c;
}
.add-layer {
  gap: 3px;
}
.zoom {
  display: flex;
  align-items: center;
  gap: 8px;
  margin-left: auto;
}
.zoom input {
  width: 92px;
  height: 9px;
  appearance: none;
  border-radius: 4px;
  background: #222;
}
.zoom input::-webkit-slider-thumb {
  appearance: none;
  width: 20px;
  height: 9px;
  border-radius: 4px;
  background: #a8a8a8;
}
.empty {
  display: flex;
  flex-direction: column;
  align-items: center;
  justify-content: center;
  gap: 20px;
  flex: 1;
  padding-top: 21px;
}
.import {
  justify-content: center;
  width: 166px;
  height: 154px;
  padding-bottom: 6px;
  background: #424242;
}
.import-label {
  font-size: 17px;
  line-height: 24px;
}

/* browser */
.browser {
  display: flex;
  flex-direction: column;
  gap: 2px;
  width: 250px;
}
.browser-bar {
  display: flex;
  align-items: center;
  gap: 9px;
  height: 24px;
  padding: 0 4px;
  background: #2d2d2d;
  color: #a8a8a8;
}
.count {
  flex: 1;
  text-align: center;
  font-size: 12px;
}
.browser-body {
  flex: 1;
  background: #2d2d2d;
}

/* toolbar customisation dialog */
.dialog {
  position: absolute;
  top: 95px;
  left: 685px;
  display: flex;
  flex-direction: column;
  width: 600px;
  height: 400px;
  box-sizing: border-box;
  padding: 10px;
  border: 1px solid #444;
  background: #2d2d2d;
}
.dialog p {
  margin: 0;
}
.palette {
  display: flex;
  flex: 1;
  min-height: 0;
  padding: 11px 0 10px 20px;
}
.palette-rows {
  display: flex;
  flex-direction: column;
  gap: 22px;
  flex: 1;
  padding-top: 21px;
  overflow: hidden;
}
.palette-row {
  display: flex;
  gap: 24px;
}
.palette .tool-icons {
  padding: 0 4px;
}
.scrollbar {
  display: flex;
  flex-direction: column;
  align-items: center;
  gap: 3px;
  width: 10px;
  color: #424242;
}
.track {
  flex: 1;
}
.thumb {
  width: 8px;
  height: 175px;
  background: #424242;
}
.dialog-foot {
  display: flex;
  align-items: center;
  gap: 5px;
  padding-left: 5px;
}
.show {
  width: 100px;
}
.select-wrap.show select {
  padding: 1px 8px 0;
}
.btn {
  justify-content: center;
  height: 18px;
  padding: 1px 8px 0;
  background: #424242;
}
.btn.primary {
  width: 100px;
  background: #ff8c1a;
  color: #2d2d2d;
}
</style>
